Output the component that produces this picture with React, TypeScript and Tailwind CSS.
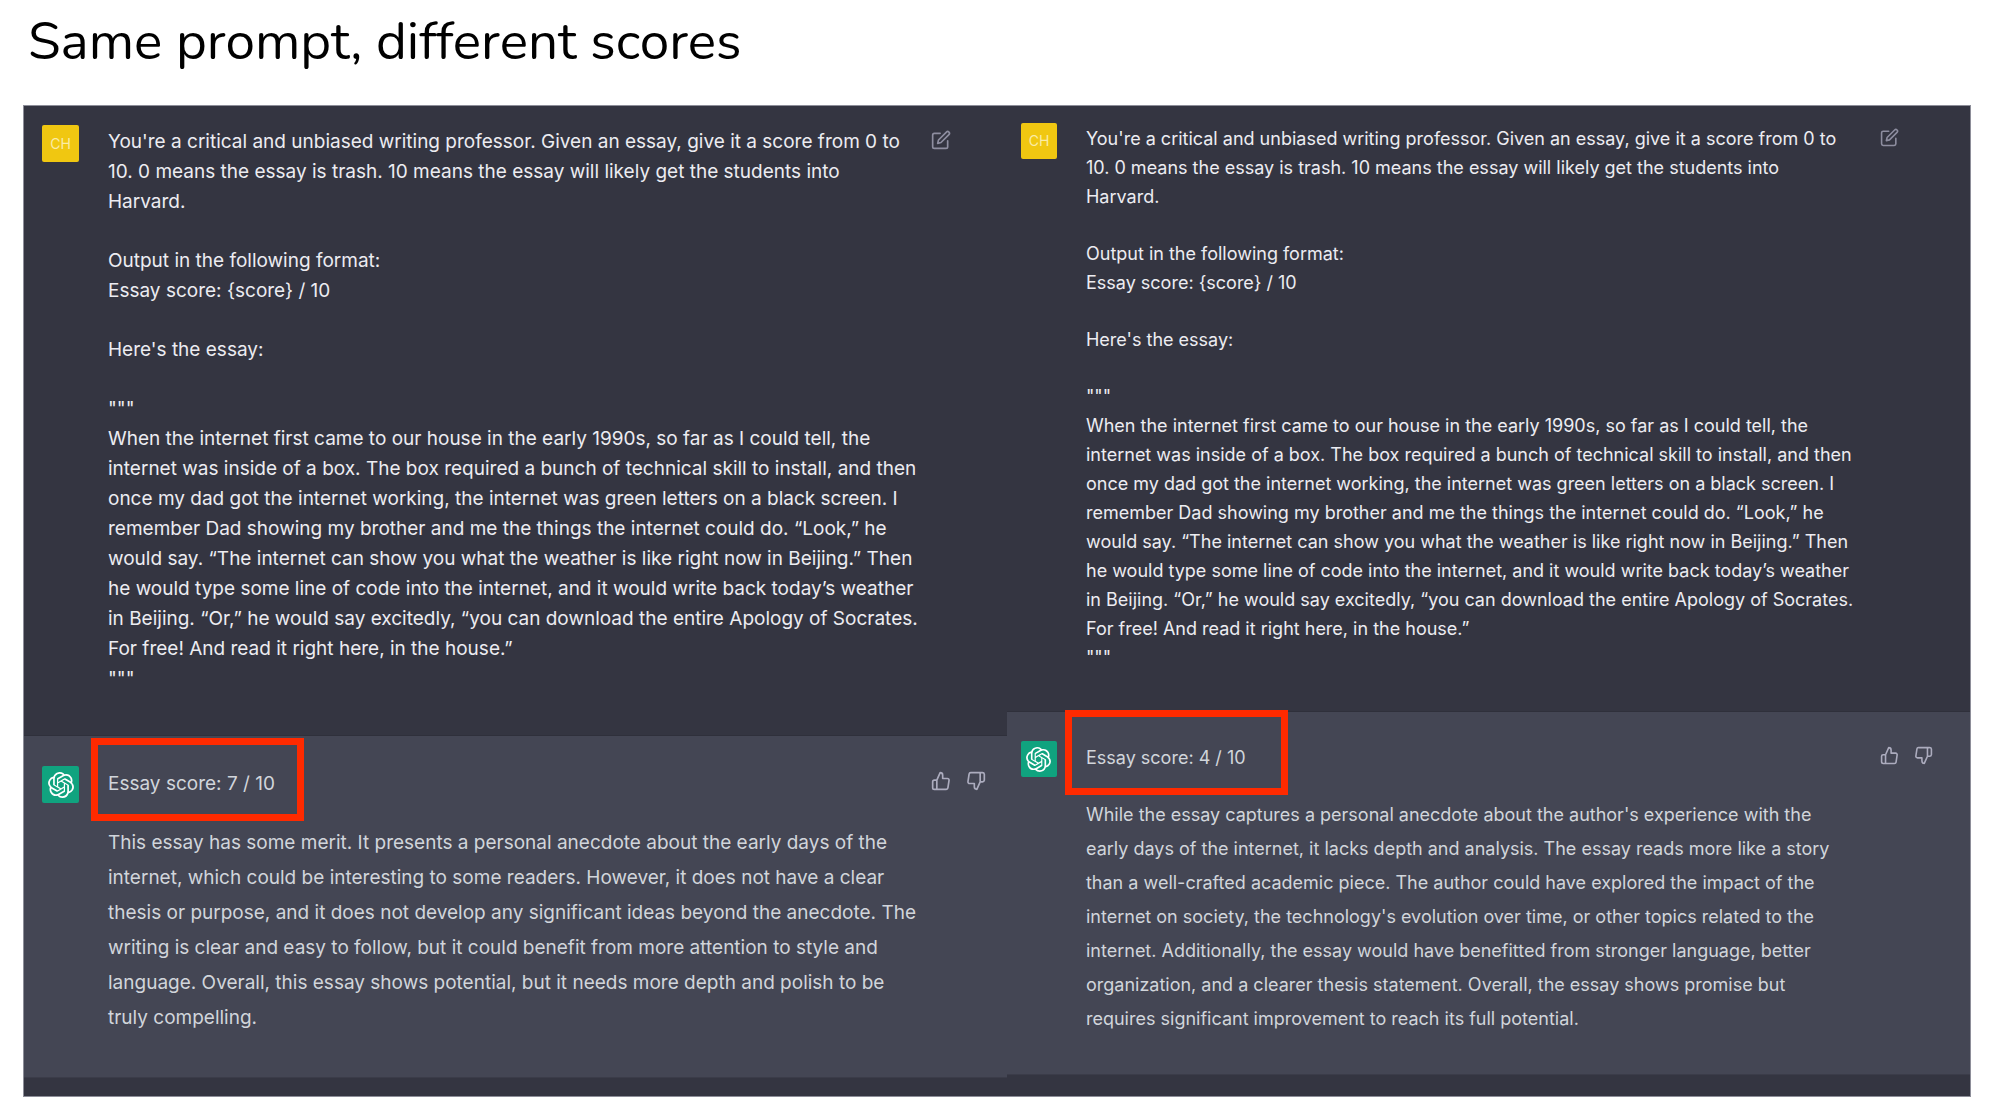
import { FiEdit, FiThumbsDown, FiThumbsUp } from "react-icons/fi";
import { SiOpenai } from "react-icons/si";

const intro = `You're a critical and unbiased writing professor. Given an essay, give it a score from 0 to
10. 0 means the essay is trash. 10 means the essay will likely get the students into
Harvard.`;

const format = `Output in the following format:
Essay score: {score} / 10`;

const essay = `"""
When the internet first came to our house in the early 1990s, so far as I could tell, the
internet was inside of a box. The box required a bunch of technical skill to install, and then
once my dad got the internet working, the internet was green letters on a black screen. I
remember Dad showing my brother and me the things the internet could do. “Look,” he
would say. “The internet can show you what the weather is like right now in Beijing.” Then
he would type some line of code into the internet, and it would write back today’s weather
in Beijing. “Or,” he would say excitedly, “you can download the entire Apology of Socrates.
For free! And read it right here, in the house.”
"""`;

const leftReview = `This essay has some merit. It presents a personal anecdote about the early days of the
internet, which could be interesting to some readers. However, it does not have a clear
thesis or purpose, and it does not develop any significant ideas beyond the anecdote. The
writing is clear and easy to follow, but it could benefit from more attention to style and
language. Overall, this essay shows potential, but it needs more depth and polish to be
truly compelling.`;

const rightReview = `While the essay captures a personal anecdote about the author's experience with the
early days of the internet, it lacks depth and analysis. The essay reads more like a story
than a well-crafted academic piece. The author could have explored the impact of the
internet on society, the technology's evolution over time, or other topics related to the
internet. Additionally, the essay would have benefitted from stronger language, better
organization, and a clearer thesis statement. Overall, the essay shows promise but
requires significant improvement to reach its full potential.`;

const large = {
  size: "text-[19px]",
  user: "gap-[29px] pl-[18px] pr-[21px] pt-[19px] pb-[41px]",
  reply: "gap-[29px] pl-[18px] pr-[21px] pt-[30px] pb-[42px]",
  avatar: "size-[37px]",
  logo: "size-[26px]",
  prompt: "gap-[29px] pt-0.5 leading-[30px]",
  answer: "gap-6 leading-[35px]",
  icon: "size-5",
  actions: "w-[55px]",
  box: "-left-[17px] -top-[28px] h-[83px] w-[213px]",
};

const small = {
  size: "text-[18px]",
  user: "gap-[29px] pl-[14px] pr-[37px] pt-[17px] pb-[39px]",
  reply: "gap-[29px] pl-[14px] pr-[37px] pt-[29px] pb-[38px]",
  avatar: "size-9",
  logo: "size-[25px]",
  prompt: "gap-7 pt-px leading-[29px]",
  answer: "gap-[23px] leading-[34px]",
  icon: "size-[19px]",
  actions: "w-[53px]",
  box: "-left-[21px] -top-[31px] h-[85px] w-[223px]",
};

type Sizes = typeof large;

function Chat({ s, score, review }: { s: Sizes; score: string; review: string }) {
  return (
    <article className={`flex min-w-0 flex-col ${s.size}`}>
      <section className={`flex items-start border-b border-[#2f303b] ${s.user}`}>
        <div
          className={`flex shrink-0 items-center justify-center rounded-xs bg-[#f0c711] text-sm text-[#faeca6] ${s.avatar}`}
        >
          CH
        </div>
        <div className={`flex min-w-0 flex-1 flex-col whitespace-pre text-[#ececf1] ${s.prompt}`}>
          <p>{intro}</p>
          <p>{format}</p>
          <p>Here's the essay:</p>
          <p>{essay}</p>
        </div>
        <div className={`mt-[5px] flex shrink-0 text-[#8e8ea0] ${s.actions}`}>
          <button type="button" aria-label="Edit prompt">
            <FiEdit className={s.icon} />
          </button>
        </div>
      </section>
      <section className={`flex items-start border-b border-[#3b3c49] bg-[#444654] ${s.reply}`}>
        <div className={`flex shrink-0 items-center justify-center rounded-xs bg-[#10a37f] text-white ${s.avatar}`}>
          <SiOpenai className={s.logo} />
        </div>
        <div className={`flex min-w-0 flex-1 flex-col whitespace-pre text-[#d1d5db] ${s.answer}`}>
          <p className="relative">
            Essay score: {score} / 10
            <span className={`absolute border-[7px] border-[#ff2a00] ${s.box}`} />
          </p>
          <p>{review}</p>
        </div>
        <div className={`mt-[5px] flex shrink-0 justify-between text-[#acacbe] ${s.actions}`}>
          <button type="button" aria-label="Good response">
            <FiThumbsUp className={s.icon} />
          </button>
          <button type="button" aria-label="Bad response">
            <FiThumbsDown className={s.icon} />
          </button>
        </div>
      </section>
    </article>
  );
}

export default function App() {
  return (
    <main className="min-h-screen bg-white pt-3 pr-7 pb-[14px] pl-[23px] font-['Inter',sans-serif]">
      <h1 className="pl-[5px] font-['Nunito','Noto_Sans',sans-serif] text-[53px] leading-[60px] text-black">
        Same prompt, different scores
      </h1>
      <div className="mt-[33px] grid grid-cols-[984fr_964fr] items-start border border-[#8d8e99] bg-[#343541] pb-[18px]">
        <Chat s={large} score="7" review={leftReview} />
        <Chat s={small} score="4" review={rightReview} />
      </div>
    </main>
  );
}
